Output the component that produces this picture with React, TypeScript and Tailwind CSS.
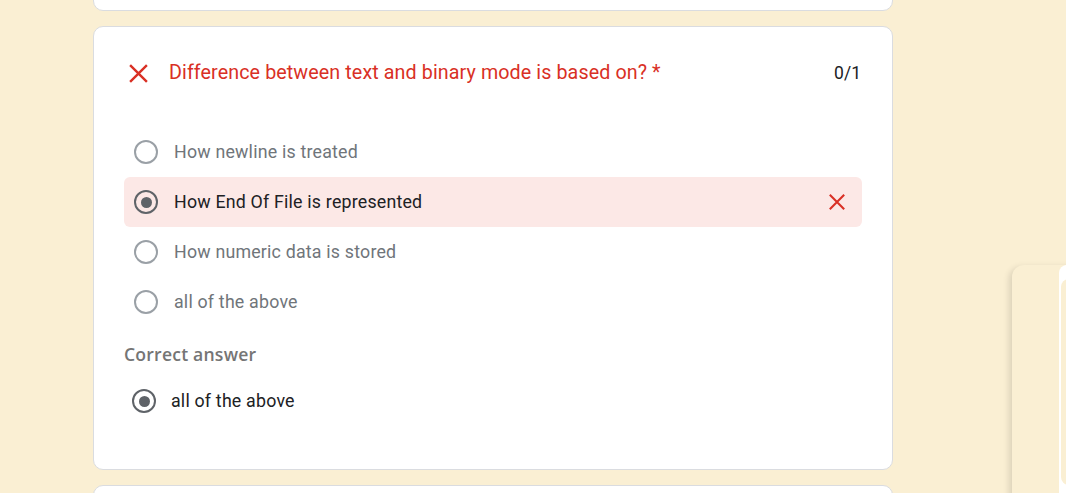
const options = [
  { id: 1, label: 'How newline is treated', selected: false },
  { id: 2, label: 'How End Of File is represented', selected: true },
  { id: 3, label: 'How numeric data is stored', selected: false },
  { id: 4, label: 'all of the above', selected: false },
]

function Radio({ checked }: { checked: boolean }) {
  if (checked) {
    return (
      <span className="w-[24px] h-[24px] shrink-0 rounded-full border-[2.5px] border-[#5f6368] flex items-center justify-center">
        <span className="w-[11px] h-[11px] rounded-full bg-[#5f6368]" />
      </span>
    )
  }
  return <span className="w-[24px] h-[24px] shrink-0 rounded-full border-[2px] border-[#9aa0a6]" />
}

function Cross({ size }: { size: number }) {
  return (
    <svg width={size} height={size} viewBox="0 0 20 20" className="shrink-0">
      <path d="M2 2 L18 18 M18 2 L2 18" stroke="#d93025" strokeWidth="2.3" strokeLinecap="butt" />
    </svg>
  )
}

export default function App() {
  return (
    <div
      className="relative h-[493px] w-full overflow-hidden bg-[#faefd3]"
      style={{ fontFamily: 'Roboto, "Noto Sans", sans-serif' }}
    >
      <div className="ml-[93px] w-[800px] flex flex-col gap-[15px]">
        {/* previous question card, mostly scrolled away */}
        <div className="-mt-[30px] h-[41px] rounded-[10px] border border-[#dadce0] bg-white" />

        {/* question card */}
        <div className="h-[444px] rounded-[10px] border border-[#dadce0] bg-white px-[30px] pt-[35px]">
          <div className="flex items-center h-[22px]">
            <div className="w-[25px] pl-[4px] flex items-center">
              <Cross size={21} />
            </div>
            <div className="ml-[20px] flex-1 text-[19.7px] text-[#d93025] tracking-[0.1px]">
              Difference between text and binary mode is based on? *
            </div>
            <div className="text-[17.5px] text-[#202124] pr-[1px]">0/1</div>
          </div>

          <div className="mt-[43px] flex flex-col">
            {options.map((o) => (
              <div
                key={o.id}
                className={
                  o.selected
                    ? 'h-[50px] flex items-center px-[10px] rounded-[6px] bg-[#fce8e6]'
                    : 'h-[50px] flex items-center px-[10px]'
                }
              >
                <Radio checked={o.selected} />
                <span
                  className={
                    o.selected
                      ? 'ml-[16px] flex-1 text-[17.8px] text-[#202124] tracking-[0.2px]'
                      : 'ml-[16px] flex-1 text-[17.8px] text-[#70757a] tracking-[0.2px]'
                  }
                >
                  {o.label}
                </span>
                {o.selected && (
                  <span className="mr-[6px]">
                    <Cross size={18} />
                  </span>
                )}
              </div>
            ))}
          </div>

          <div
            className="mt-[14px] text-[17.6px] font-semibold text-[#757575] tracking-[0.2px]"
            style={{ fontFamily: '"Open Sans", Roboto, sans-serif' }}
          >
            Correct answer
          </div>

          <div className="mt-[19px] h-[30px] flex items-center pl-[8px]">
            <Radio checked={true} />
            <span className="ml-[15px] text-[17.8px] text-[#202124] tracking-[0.2px]">all of the above</span>
          </div>
        </div>

        {/* next card */}
        <div className="h-[40px] rounded-[10px] border border-[#dadce0] bg-white" />
      </div>

      {/* floating side panel */}
      <div className="absolute left-[1012px] top-[265px] w-[80px] h-[260px] rounded-tl-[12px] bg-[#faefd3] shadow-[-3px_2px_6px_rgba(0,0,0,0.12)]">
        <div className="absolute left-[47px] top-0 right-0 bottom-0 bg-white rounded-tl-[8px]">
          <div className="absolute left-[2px] top-[14px] right-0 h-[206px] rounded-l-[8px] bg-[#faefd3]" />
        </div>
      </div>
    </div>
  )
}
